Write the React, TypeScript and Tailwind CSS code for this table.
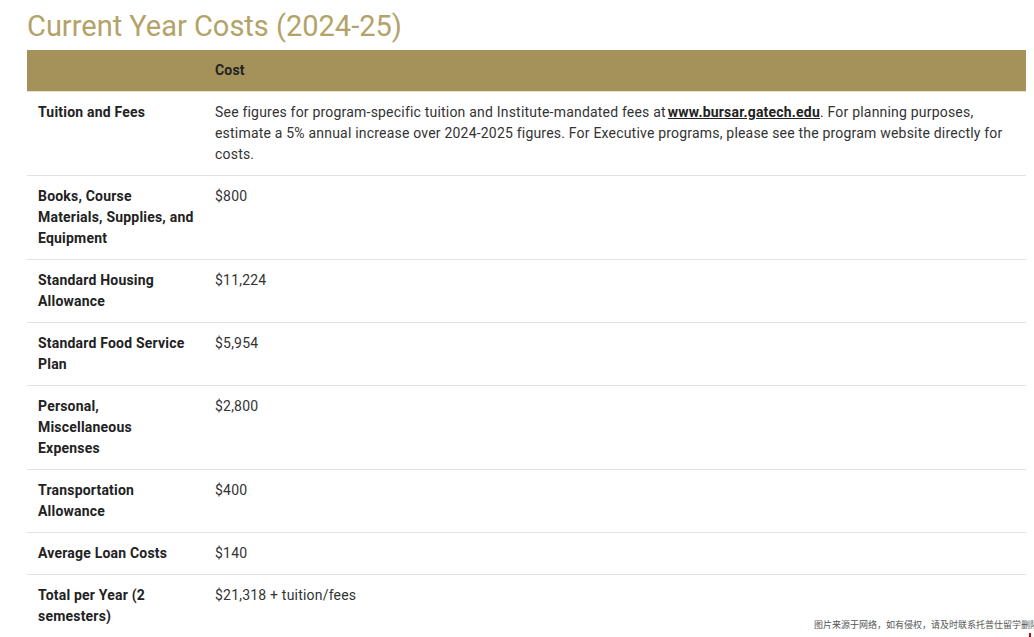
const rows: { label: string; cost: React.ReactNode }[] = [
  {
    label: "Tuition and Fees",
    cost: (
      <>
        See figures for program-specific tuition and Institute-mandated fees at
        <a href="#" className="ml-[2px] font-bold underline text-[#222]">
          www.bursar.gatech.edu
        </a>
        . For planning purposes, estimate a 5% annual increase over 2024-2025 figures. For Executive
        programs, please see the program website directly for costs.
      </>
    ),
  },
  { label: "Books, Course Materials, Supplies, and Equipment", cost: "$800" },
  { label: "Standard Housing Allowance", cost: "$11,224" },
  { label: "Standard Food Service Plan", cost: "$5,954" },
  { label: "Personal, Miscellaneous Expenses", cost: "$2,800" },
  { label: "Transportation Allowance", cost: "$400" },
  { label: "Average Loan Costs", cost: "$140" },
  { label: "Total per Year (2 semesters)", cost: "$21,318 + tuition/fees" },
];

export default function App() {
  return (
    <div className="relative min-h-[637px] bg-white overflow-hidden font-['Roboto',sans-serif] text-[#333]">
      <h2 className="ml-[27px] mt-[8px] mb-[6px] text-[29px] leading-[36px] text-[#b3a369] font-normal">
        Current Year Costs (2024-25)
      </h2>

      <table className="ml-[27px] w-[999px] table-fixed border-collapse text-[14px] leading-[21px] tracking-[0.2px]">
        <colgroup>
          <col className="w-[177px]" />
          <col />
        </colgroup>
        <thead>
          <tr className="bg-[#a4925a] border-b border-[#e6e0d2]">
            <th className="py-[10px] px-[11px]"></th>
            <th className="py-[10px] px-[11px] text-left font-bold text-[#222]">Cost</th>
          </tr>
        </thead>
        <tbody>
          {rows.map((r) => (
            <tr key={r.label} className="border-b border-[#e2e2e2] align-top">
              <td className="py-[10px] pl-[11px] pr-[9px] font-bold text-[#222]">{r.label}</td>
              <td className="py-[10px] pl-[11px] pr-[11px]">{r.cost}</td>
            </tr>
          ))}
        </tbody>
      </table>

      <div className="absolute left-[814px] top-[619px] whitespace-nowrap text-[9px] leading-[12px] text-[#555] font-['Noto_Sans_CJK_SC',sans-serif]">
        图片来源于网络，如有侵权，请及时联系托普仕留学删除
      </div>
      <div className="absolute left-[1029px] top-[633px] w-[2px] h-[4px] bg-[#c00]"></div>
    </div>
  );
}
